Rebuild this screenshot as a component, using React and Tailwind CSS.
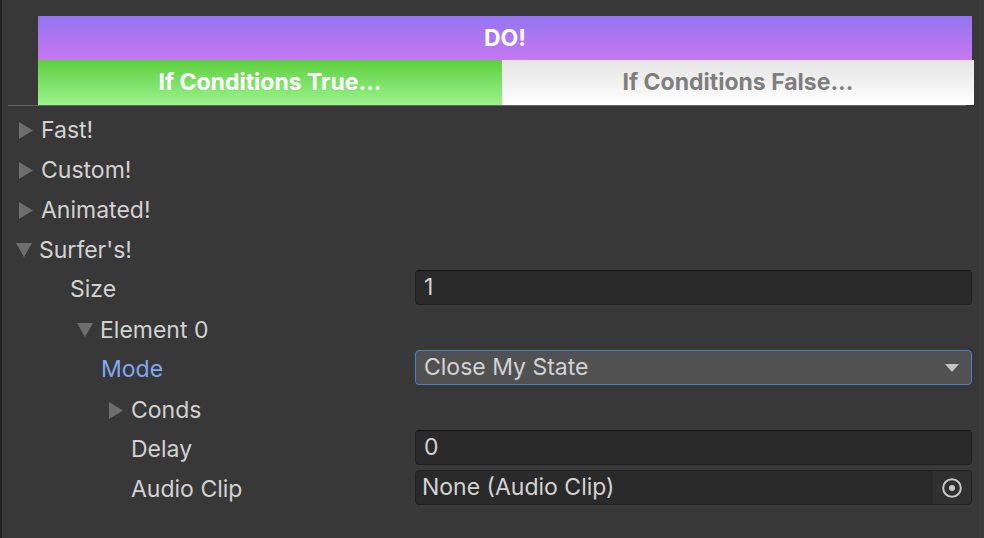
const Tri = ({ open }) =>
  open ? (
    <svg width="16" height="16" viewBox="0 0 16 16" className="shrink-0">
      <polygon points="0,1 16,1 8,15" fill="#6e6e6e" />
    </svg>
  ) : (
    <svg width="16" height="17" viewBox="0 0 16 17" className="shrink-0">
      <polygon points="1,0 15,8.5 1,17" fill="#6e6e6e" />
    </svg>
  )

function Foldout({ indent, open, label }) {
  return (
    <div className="h-10 flex items-center" style={{ paddingLeft: indent }}>
      <Tri open={open} />
      <span className="ml-[7px] text-[23px] text-[#d2d2d2]">{label}</span>
    </div>
  )
}

function Field({ indent, label, labelClass = 'text-[#d2d2d2]', children }) {
  return (
    <div className="h-10 flex">
      <div className="w-[413px] h-[38px] flex items-center shrink-0" style={{ paddingLeft: indent }}>
        <span className={`text-[23px] ${labelClass}`}>{label}</span>
      </div>
      <div className="w-[557px] h-[35px]">{children}</div>
    </div>
  )
}

const TextBox = ({ value }) => (
  <div className="h-full rounded-[4px] bg-[#2a2a2a] border border-[#202020] border-t-[#111] flex items-center px-2 text-[23px] text-[#d2d2d2]">
    {value}
  </div>
)

export default function App() {
  return (
    <div
      className="w-[984px] h-[538px] bg-[#383838] flex overflow-hidden"
      style={{ fontFamily: 'Inter, "Noto Sans", sans-serif' }}
    >
      <div className="w-[2px] bg-[#232323] shrink-0" />
      <div className="flex-1 relative">
        {/* header buttons */}
        <div className="pt-4 pl-9">
          <div className="w-[934px] h-[44px] flex items-center justify-center bg-gradient-to-b from-[#9474f2] to-[#c678f0] text-white font-bold text-[23px]">
            DO!
          </div>
          <div className="flex w-[936px] h-[45px]">
            <div className="w-[464px] flex items-center justify-center bg-gradient-to-b from-[#5dcf3b] to-[#9af28c] text-white font-bold text-[23px]">
              If Conditions True...
            </div>
            <div className="flex-1 flex items-center justify-center bg-gradient-to-b from-[#e4e4e4] to-[#ffffff] text-[#7e7e7e] font-bold text-[23px]">
              If Conditions False...
            </div>
          </div>
        </div>
        <div className="ml-[6px] w-[958px] h-px bg-[#626262]" />

        <div className="pt-1">
          <Foldout indent={16} label="Fast!" />
          <Foldout indent={16} label="Custom!" />
          <Foldout indent={16} label="Animated!" />
          <Foldout indent={14} open label="Surfer's!" />
          <Field indent={68} label="Size">
            <TextBox value="1" />
          </Field>
          <Foldout indent={75} open label="Element 0" />
          <Field indent={99} label="Mode" labelClass="text-[#7fa8f0]">
            <div className="h-full rounded-[4px] bg-[#515151] border-[1.5px] border-[#4a80cc] flex items-center justify-between pl-2 pr-3 text-[23px] text-[#d2d2d2]">
              <span>Close My State</span>
              <svg width="14" height="8" viewBox="0 0 14 8">
                <polygon points="0,0 14,0 7,8" fill="#c4c4c4" />
              </svg>
            </div>
          </Field>
          <Foldout indent={106} label="Conds" />
          <Field indent={129} label="Delay">
            <TextBox value="0" />
          </Field>
          <Field indent={129} label="Audio Clip">
            <div className="h-full rounded-[4px] bg-[#2a2a2a] border border-[#202020] flex items-center text-[23px] text-[#d2d2d2] overflow-hidden">
              <span className="flex-1 pl-[6px]">None (Audio Clip)</span>
              <div className="w-[38px] h-full bg-[#303030] flex items-center justify-center">
                <svg width="22" height="22" viewBox="0 0 22 22">
                  <circle cx="11" cy="11" r="8.8" fill="none" stroke="#c8c8c8" strokeWidth="2" />
                  <circle cx="11" cy="11" r="3" fill="#c8c8c8" />
                </svg>
              </div>
            </div>
          </Field>
        </div>
        <div className="absolute top-0 right-0 w-[5px] h-full bg-[#3c3c3c]" />
      </div>
    </div>
  )
}
